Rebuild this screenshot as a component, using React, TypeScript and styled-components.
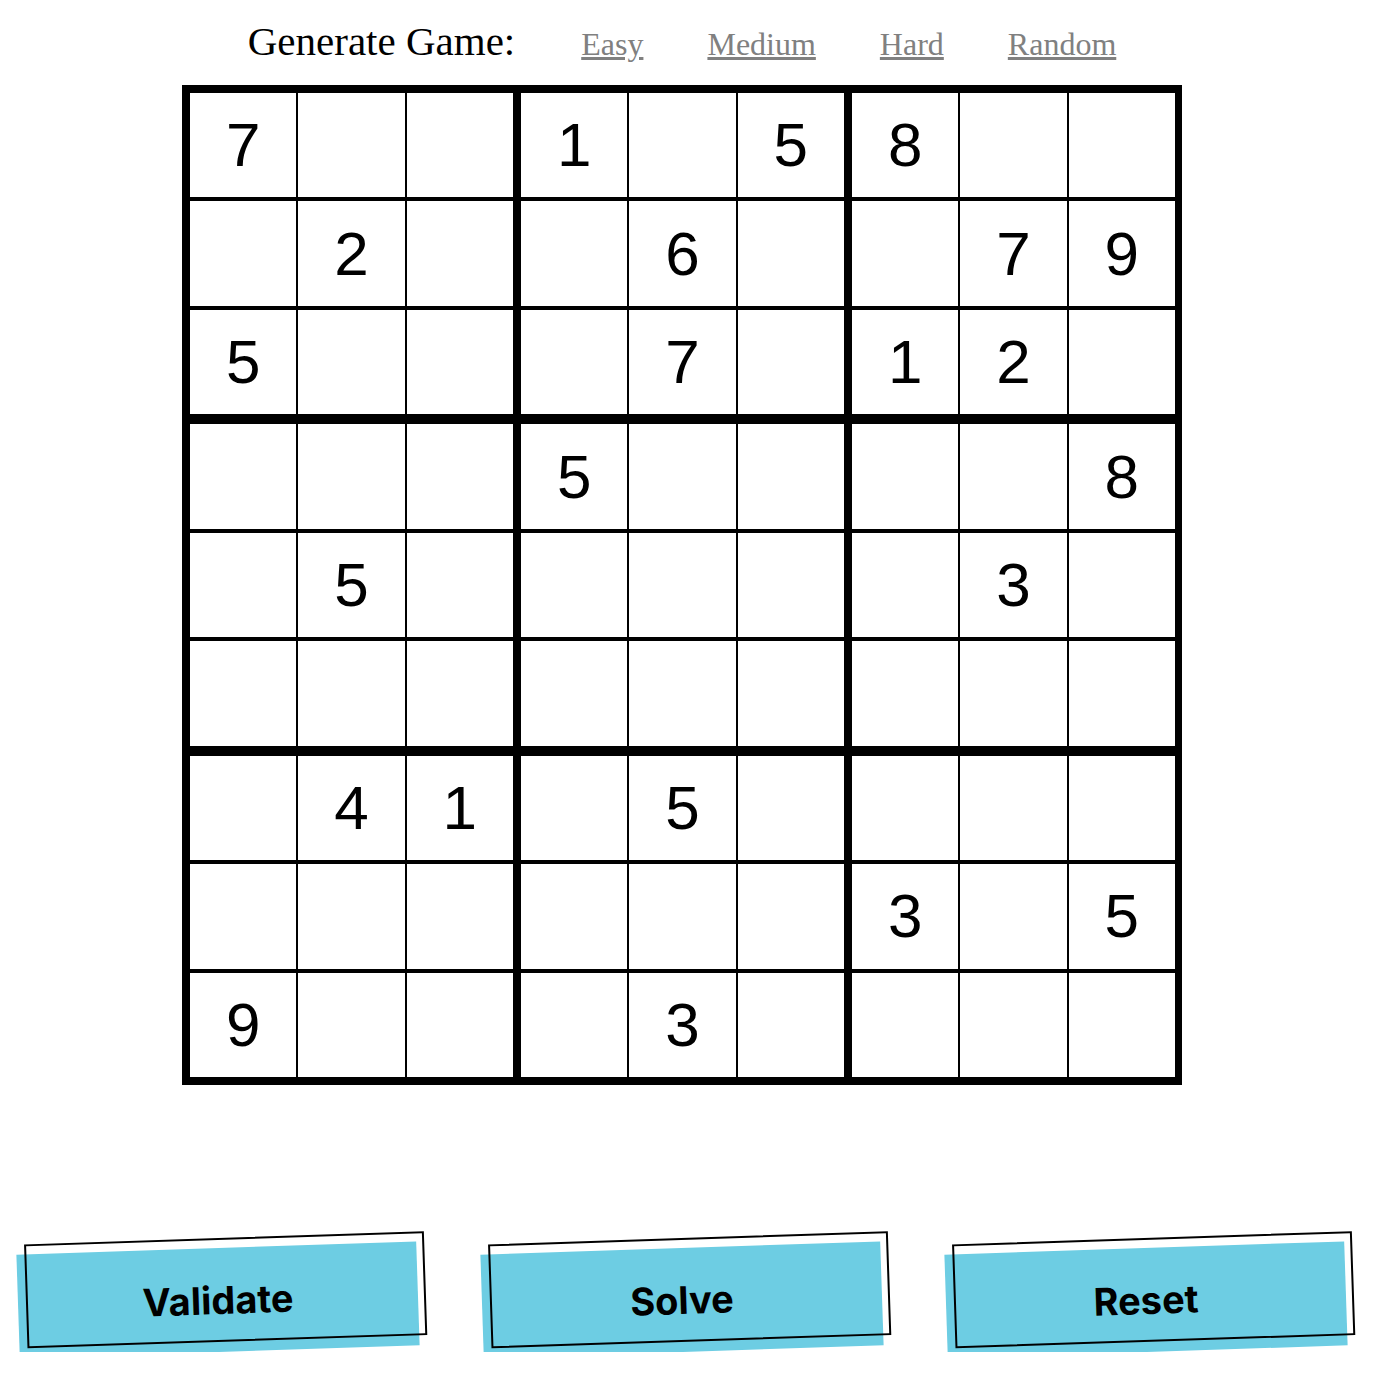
import React from "react";
import styled, { createGlobalStyle } from "styled-components";

const GlobalStyle = createGlobalStyle`
  html, body { margin: 0; padding: 0; background: #ffffff; }
  body { font-family: "Liberation Serif", "Times New Roman", serif; }
`;

const Page = styled.div`
  width: 1364px;
  display: flex;
  flex-direction: column;
  align-items: center;
  padding-top: 17px;
`;

const Header = styled.div`
  display: flex;
  align-items: baseline;
  gap: 64px;
  margin-bottom: 20px;
  font-family: "Liberation Serif", "Times New Roman", serif;
`;

const Title = styled.span`
  font-size: 41px;
  color: #000;
  margin-right: 2px;
`;

const LevelLink = styled.a`
  font-size: 32px;
  color: #808080;
  text-decoration: underline;
  cursor: pointer;
`;

const Board = styled.div`
  box-sizing: border-box;
  display: grid;
  grid-template-columns: repeat(9, auto);
  grid-template-rows: repeat(9, auto);
  border-style: solid;
  border-color: #000;
  border-width: 8px 7px 8px 8px;
`;

const Cell = styled.div<{ $col: number; $row: number }>`
  box-sizing: content-box;
  width: 106.33px;
  height: 104.44px;
  display: flex;
  align-items: center;
  justify-content: center;
  border-style: solid;
  border-color: #000;
  border-width: 0
    ${(p) => (p.$col === 8 ? 0 : p.$col % 3 === 2 ? 8 : 2)}px
    ${(p) => (p.$row === 8 ? 0 : p.$row % 3 === 2 ? 10 : 4)}px 0;
  font-family: "Liberation Sans", Arial, sans-serif;
  font-size: 62px;
  color: #000;
  line-height: 1;
`;

const ButtonRow = styled.div`
  display: flex;
  justify-content: center;
  gap: 64px;
  margin-top: 163px;
`;

const ActionButton = styled.button`
  position: relative;
  box-sizing: border-box;
  width: 400px;
  height: 104px;
  padding: 0;
  border: none;
  background: #6dcde3;
  color: #000;
  font-family: Inter, "Noto Sans", sans-serif;
  font-weight: 700;
  font-size: 38px;
  transform: rotate(-1.9deg);
  cursor: pointer;

  &::after {
    content: "";
    position: absolute;
    inset: 0;
    border: 2px solid #000;
    transform: translate(8px, -10px);
    pointer-events: none;
  }
`;

const puzzle: string[] = [
  "7  1 58  ",
  " 2  6  79",
  "5   7 12 ",
  "   5    8",
  " 5     3 ",
  "         ",
  " 41 5    ",
  "      3 5",
  "9   3    ",
];

export default function App() {
  return (
    <>
      <GlobalStyle />
      <Page>
        <Header>
          <Title>Generate Game:</Title>
          <LevelLink>Easy</LevelLink>
          <LevelLink>Medium</LevelLink>
          <LevelLink>Hard</LevelLink>
          <LevelLink>Random</LevelLink>
        </Header>
        <Board>
          {puzzle.map((row, r) =>
            row.split("").map((ch, c) => (
              <Cell key={`${r}-${c}`} $row={r} $col={c}>
                {ch.trim()}
              </Cell>
            ))
          )}
        </Board>
        <ButtonRow>
          <ActionButton>Validate</ActionButton>
          <ActionButton>Solve</ActionButton>
          <ActionButton>Reset</ActionButton>
        </ButtonRow>
      </Page>
    </>
  );
}
